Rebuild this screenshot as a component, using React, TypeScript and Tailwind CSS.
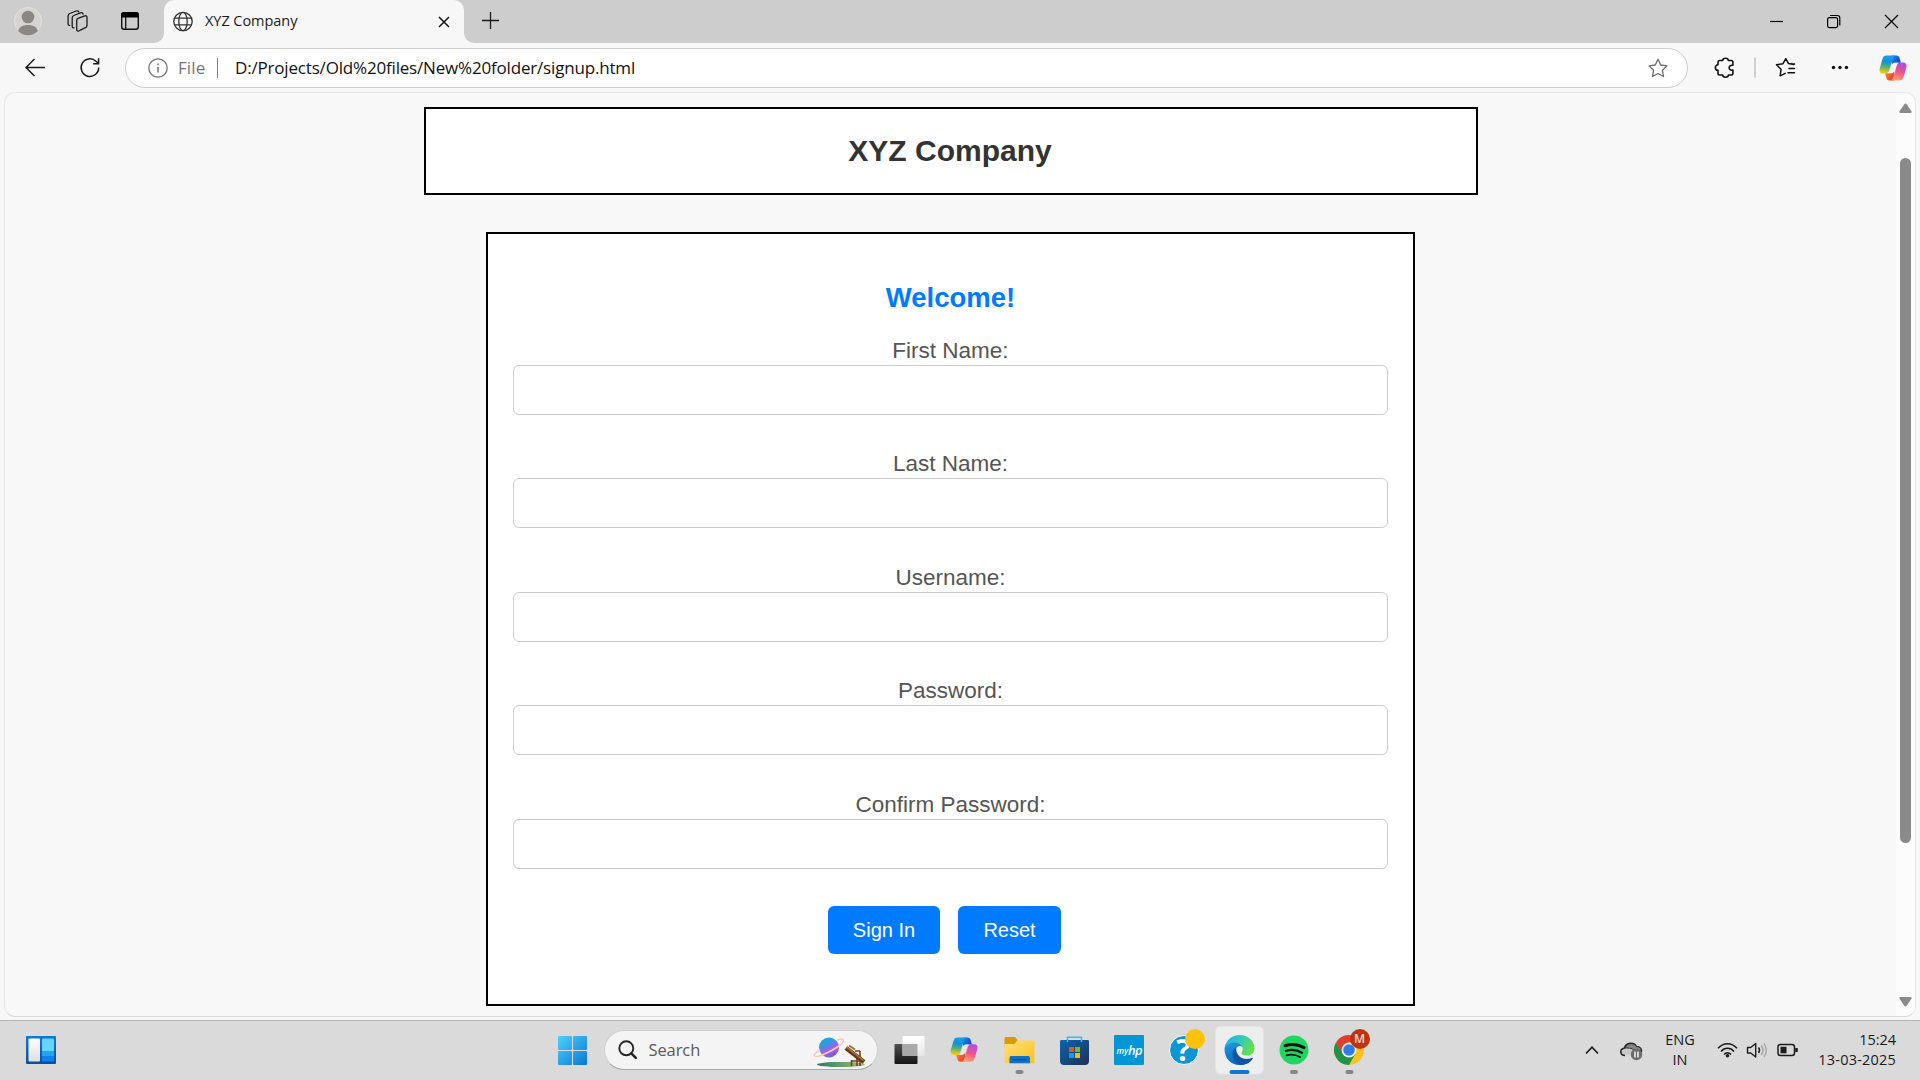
import React from "react";

const UI = "font-['Open_Sans','Noto_Sans',sans-serif]";

function CopilotMark({ id, hole }: { id: string; hole: string }) {
  return (
    <>
      <defs>
        <linearGradient id={id + "a"} x1="0.4" y1="0" x2="0.3" y2="1">
          <stop offset="0" stopColor="#1a9cf0" />
          <stop offset="0.35" stopColor="#1390d8" />
          <stop offset="0.65" stopColor="#5cb56a" />
          <stop offset="0.95" stopColor="#f2c811" />
        </linearGradient>
        <linearGradient id={id + "b"} x1="0.7" y1="0" x2="0.4" y2="1">
          <stop offset="0" stopColor="#a94fe8" />
          <stop offset="0.5" stopColor="#ee5190" />
          <stop offset="1" stopColor="#ffa36b" />
        </linearGradient>
        <linearGradient id={id + "c"} x1="0" y1="0" x2="1" y2="0.6">
          <stop offset="0" stopColor="#1a8ff0" />
          <stop offset="1" stopColor="#1a3fc4" />
        </linearGradient>
        <linearGradient id={id + "d"} x1="0" y1="0" x2="1" y2="0.6">
          <stop offset="0" stopColor="#ff8a2a" />
          <stop offset="1" stopColor="#e8402f" />
        </linearGradient>
      </defs>
      <path d="M13 0.500h4.500c1.600 0 2.600 1 3 2.300l1.400 4.900h-5l-4 2z" fill={`url(#${id}c)`} />
      <path d="M15 25.500h-4.500c-1.600 0-2.600-1-3-2.300L6.100 18.300h5l4-2z" fill={`url(#${id}d)`} />
      <path d="M7.500 0.500h9c-1.500 0.500-2.200 1.500-2.700 3.200l-3.400 11.400c-0.700 2.200-1.800 3.400-4 3.400H4.200c-3 0-4.300-2-3.500-5L3.500 3.800C4.200 1.500 5.500 0.500 7.500 0.500z" fill={`url(#${id}a)`} />
      <path d="M20.500 25.500h-9c1.500-0.500 2.200-1.500 2.700-3.200l3.400-11.400c0.700-2.200 1.800-3.400 4-3.400h2.200c3 0 4.300 2 3.500 5l-2.800 9.700c-0.700 2.300-2 3.300-4 3.300z" fill={`url(#${id}b)`} />
      <path d="M15.300 7.700H19C17.600 8.200 17.200 9.200 16.800 10.500L15.300 15.500C14.700 17.400 13.800 18.300 12.500 18.300H9C10.400 17.800 10.800 16.800 11.200 15.500L12.700 10.500C13.300 8.600 14 7.700 15.300 7.700z" fill={hole} />
    </>
  );
}

function TabStrip() {
  return (
    <div className="flex h-[43px] w-full bg-[#cdcdcd]">
      <svg width="154" height="43" fill="none">
        <circle cx="28" cy="21" r="13.500" fill="#d6d4d0" stroke="#e6e3de" />
        <circle cx="28" cy="17" r="6.300" fill="#8b8783" />
        <path d="M18.200 31c0.800-4 4.800-6 9.800-6s9 2 9.800 6a13.500 13.500 0 0 1-19.600 0z" fill="#8b8783" />
        <g stroke="#1b1b1b" strokeWidth="1.300" strokeLinejoin="round" strokeLinecap="round" transform="translate(-0.500 0)">
          <path d="M78.500 18.300l6.800-2.400c1.200-.4 2.200.2 2.200 1.500v8c0 1.200-.6 1.900-1.600 2.300l-6 3c-1.500.8-2.700.2-2.700-1.300v-8.900c0-1.200.3-1.800 1.300-2.200z" />
          <path d="M74.500 27.800c-1.200.2-1.800-.6-1.800-1.600v-8.400c0-1.200.6-1.900 1.600-2.300l6.500-2.600c1.400-.5 2.600.1 2.800 1.300" />
          <path d="M70.200 25.300c-1.100.1-1.600-.6-1.600-1.600v-7.900c0-1.200.6-1.900 1.600-2.300l6.400-2.500c1.300-.4 2.300 0 2.600 1" />
        </g>
        <rect x="121.700" y="12.700" width="16.600" height="16.600" rx="2.500" stroke="#111" strokeWidth="1.400" />
        <path d="M121 17.500V15c0-1.700 1.300-3 3-3h12c1.700 0 3 1.300 3 3v2.500z" fill="#000" />
        <path d="M125.700 17v12" stroke="#111" strokeWidth="1.300" />
      </svg>
      <div className="flex h-[43px] w-[10px] items-end bg-[#f7f7f7]">
        <div className="h-[43px] w-[10px] rounded-br-[10px] bg-[#cdcdcd]" />
      </div>
      <div className="flex h-[43px] w-[300px] items-center rounded-t-[10px] bg-[#f7f7f7]">
        <svg width="20" height="21" viewBox="0 0 20 21" fill="none" stroke="#333" strokeWidth="1.300" className="ml-[9px]">
          <circle cx="10" cy="10.500" r="9.200" />
          <ellipse cx="10" cy="10.500" rx="4.200" ry="9.200" />
          <path d="M1.700 7.200h16.600M1.700 13.800h16.600" />
        </svg>
        <span className={`${UI} mb-[2px] ml-[12px] w-[220px] whitespace-nowrap text-[14.500px] tracking-[-0.050px] text-[#1b1b1b]`}>XYZ Company</span>
        <svg width="12" height="12" viewBox="0 0 12 12" stroke="#111" strokeWidth="1.500" className="ml-[13px]">
          <path d="M1 1l10 10M11 1L1 11" />
        </svg>
      </div>
      <div className="h-[43px] w-[10px] bg-[#f7f7f7]">
        <div className="h-[43px] w-[10px] rounded-bl-[10px] bg-[#cdcdcd]" />
      </div>
      <svg width="40" height="43" stroke="#1b1b1b" strokeWidth="1.300">
        <path d="M8 20.500h17M16.500 12v17" />
      </svg>
      <svg width="160" height="43" fill="none" stroke="#000" strokeWidth="1.200" className="ml-auto">
        <path d="M10 21.500h13" />
        <rect x="67.600" y="17.600" width="10" height="10" rx="1.800" />
        <path d="M70 15.500h7.500c1.400 0 2.300 1 2.300 2.300v7.700" />
        <path d="M125 15l13 13M138 15l-13 13" />
      </svg>
    </div>
  );
}

const STAR = "M10 1.300l2.700 5.700 6.200.9-4.500 4.400 1.100 6.200L10 15.500l-5.500 3 1.100-6.200L1.100 7.900l6.200-.9z";

function AddressBar() {
  return (
    <div className="flex h-[49px] w-full items-start bg-[#f7f7f7]">
      <svg width="125" height="49" fill="none" stroke="#1b1b1b" strokeWidth="1.500">
        <path d="M45 24.500H26M34.500 16L26 24.500l8.500 8.500" />
        <path d="M98.700 24.500a8.800 8.800 0 1 1-2.700-6.200l2.500 2.200M98.600 15.300v5.500h-5.500" />
      </svg>
      <div className="mt-[5px] flex h-[40px] w-[1563px] items-center rounded-full border border-[#cfcfcf] bg-white">
        <svg width="20" height="20" viewBox="0 0 20 20" fill="none" stroke="#737373" strokeWidth="1.300" className="ml-[22px]">
          <circle cx="10" cy="10" r="9.200" />
          <path d="M10 9v5.500M10 5.400v1.800" strokeWidth="1.500" />
        </svg>
        <span className={`${UI} ml-[10px] w-[30px] text-[17px] tracking-[0.100px] text-[#767676]`}>File</span>
        <div className="ml-[9px] h-[20px] w-[1px] bg-[#808080]" />
        <span className={`${UI} ml-[17px] whitespace-nowrap text-[17px] tracking-[-0.180px] text-[#111]`}>
          D:/Projects/Old%20files/New%20folder/signup.html
        </span>
        <svg width="20" height="20" viewBox="0 0 20 20" fill="none" stroke="#6b6b6b" strokeWidth="1.300" strokeLinejoin="round" className="mr-[19px] ml-auto">
          <path d={STAR} />
        </svg>
      </div>
      <svg width="232" height="49" fill="none" stroke="#111" strokeWidth="1.600" strokeLinejoin="round" strokeLinecap="round">
        <path d="M31.500 17.500h3.200c0-3 5.600-3 5.600 0h2.900c1 0 1.700.7 1.700 1.700v3.100c-5-1-5 5.800 0 4.800v3.200c0 1-.7 1.700-1.700 1.700h-2.800c0 3-5.700 3-5.700 0h-3c-1 0-1.700-.7-1.700-1.700v-2.900c-3.500 0-3.500-5.600 0-5.600v-2.600c0-1 .6-1.700 1.500-1.700z" />
        <path d="M67 15v19" stroke="#c9c9c9" strokeWidth="1.700" />
        <path d="M106 21.500l-5.500-.9-2.700-4.900-2.800 5-6.500 1.100 4.500 4.500-.8 6.500 5-2.500M101 25.500h5.500M100 29.700h6.500M103.500 21h3" strokeWidth="1.500" />
        <g fill="#111" stroke="none">
          <circle cx="145.500" cy="24.500" r="1.700" />
          <circle cx="152" cy="24.500" r="1.700" />
          <circle cx="158.500" cy="24.500" r="1.700" />
        </g>
        <g transform="translate(191 12)" stroke="none">
          <CopilotMark id="top" hole="#f7f7f7" />
        </g>
      </svg>
    </div>
  );
}

function Field({ label }: { label: string }) {
  return (
    <div className="flex h-[113.500px] w-full flex-col items-center">
      <label className="h-[26px] text-[22.500px] leading-[24px] text-[#555]">{label}</label>
      <input className="h-[50px] w-[875px] rounded-[6px] border border-[#ccc] bg-white px-3 outline-none" />
    </div>
  );
}

function Page() {
  return (
    <div className="flex h-[928px] w-full bg-[#f7f7f7] px-[4px]">
      <div className="flex h-[925px] w-full overflow-hidden rounded-[11px] border border-[#e6e6e6] border-b-[#dcdcdc] bg-[#f8f8f8]">
        <main className="flex w-[1891px] flex-col items-center pt-[14px] font-['Liberation_Sans',Arial,sans-serif]">
          <header className="ml-[1px] flex h-[88px] w-[1054px] items-center justify-center border-2 border-black bg-white pr-[2px]">
            <h1 className="text-[30px] leading-[34px] font-bold text-[#333]">XYZ Company</h1>
          </header>
          <form className="mt-[37px] flex h-[774px] w-[929px] flex-col items-center border-2 border-black bg-white">
            <h2 className="mt-[48px] text-[27.500px] leading-[32px] font-bold text-[#007bff]">Welcome!</h2>
            <div className="mt-[24.900px] w-full">
              <Field label="First Name:" />
              <Field label="Last Name:" />
              <Field label="Username:" />
              <Field label="Password:" />
              <Field label="Confirm Password:" />
            </div>
            <div className="mt-[-0.400px] mr-[12px] flex gap-[18px] text-[20px] text-white">
              <button type="button" className="h-[48px] w-[112px] rounded-[6px] bg-[#007bff]">Sign In</button>
              <button type="button" className="h-[48px] w-[103px] rounded-[6px] bg-[#007bff]">Reset</button>
            </div>
          </form>
        </main>
        <div className="flex h-full w-[19px] flex-col items-center bg-[#fcfcfc] pt-[10px]">
          <svg width="13" height="11" fill="#8a8a8a"><path d="M5.300 1.200Q6.500-.2 7.700 1.200L12.600 8.500Q13 10 11.500 10H1.500Q0 10 .4 8.500z" /></svg>
          <div className="mt-[44px] h-[685px] w-[11px] rounded-full bg-[#8a8a8a]" />
          <svg width="13" height="11" fill="#8a8a8a" className="mt-[154px]"><path d="M5.300 8.800Q6.500 10.200 7.700 8.800L12.600 1.500Q13 0 11.500 0H1.500Q0 0 .4 1.500z" /></svg>
        </div>
      </div>
    </div>
  );
}

function Cell({ children }: { children: React.ReactNode }) {
  return <svg width="55" height="60" viewBox="0 0 55 60" fill="none">{children}</svg>;
}

function Indicator() {
  return <rect x="23.500" y="50" width="8" height="4" rx="2" fill="#868686" />;
}

function Taskbar() {
  return (
    <div className="flex h-[60px] w-full items-start bg-[#dadada] shadow-[inset_0_1px_0_#b4b4b4]">
      <svg width="545" height="60" fill="none">
        <defs>
          <linearGradient id="wg" x1="0" y1="0" x2="0" y2="1"><stop stopColor="#0f7bd0" /><stop offset="1" stopColor="#0b4f9c" /></linearGradient>
          <linearGradient id="ww" x1="0" y1="0" x2="0" y2="1"><stop stopColor="#fff" /><stop offset="1" stopColor="#dedede" /></linearGradient>
        </defs>
        <rect x="26" y="16" width="30" height="28" rx="1" fill="url(#wg)" />
        <rect x="28.500" y="18.500" width="11.500" height="23" rx="1" fill="url(#ww)" />
        <rect x="42" y="18.500" width="12" height="13" rx="1" fill="#65d5ff" />
        <rect x="42" y="31" width="12" height="5" fill="#1fa5f5" />
        <rect x="42" y="36" width="12" height="5.500" rx="1" fill="#0a84ea" />
      </svg>
      <svg width="58.500" height="60">
        <defs>
          <linearGradient id="win" x1="0" y1="16" x2="29" y2="45" gradientUnits="userSpaceOnUse">
            <stop stopColor="#4fd0fb" /><stop offset="1" stopColor="#0878d4" />
          </linearGradient>
        </defs>
        <g transform="translate(13 0)" fill="url(#win)">
          <rect y="16" width="14" height="14" rx="1" /><rect x="15" y="16" width="14" height="14" rx="1" />
          <rect y="31" width="14" height="14" rx="1" /><rect x="15" y="31" width="14" height="14" rx="1" />
        </g>
      </svg>
      <div className="mt-[10px] flex h-[40px] w-[274px] items-center rounded-full border border-[#cfcfcf] border-b-[#aaa] bg-[#f4f4f4]">
        <svg width="20" height="20" viewBox="0 0 20 20" fill="none" stroke="#252525" className="ml-[13px]">
          <circle cx="8.300" cy="8.300" r="7" strokeWidth="1.900" />
          <path d="M13.300 13.300l4.500 4.500" strokeWidth="2.600" strokeLinecap="round" />
        </svg>
        <span className={`${UI} mt-[1px] ml-[11px] text-[16.500px] tracking-[-0.100px] text-[#5a5a5a]`}>Search</span>
        <svg width="56" height="38" viewBox="0 0 56 38" fill="none" className="mr-[9px] ml-auto">
          <defs>
            <linearGradient id="pl" x1="0.200" y1="0" x2="0.700" y2="1">
              <stop stopColor="#19a9dc" /><stop offset="0.300" stopColor="#2d9be0" /><stop offset="0.500" stopColor="#8170dc" /><stop offset="0.700" stopColor="#b45be0" /><stop offset="1" stopColor="#4b63d8" />
            </linearGradient>
            <linearGradient id="gr"><stop stopColor="#2a7a68" /><stop offset="1" stopColor="#9fc46a" /></linearGradient>
          </defs>
          <ellipse cx="29" cy="33.500" rx="24" ry="2.600" fill="url(#gr)" />
          <circle cx="17" cy="16.500" r="10" fill="url(#pl)" />
          <path d="M8 19C-1 24.500 1 27.500 10 24S33 12.500 31.500 9C31 7.500 29 7.500 25.500 9" stroke="#f1cdb8" strokeWidth="1.500" />
          <path d="M39.500 29v6M48 20v15M40 30h9M43 20h5M45 35V24" stroke="#7a3f22" strokeWidth="1.600" />
          <path d="M34 17l18 14" stroke="#6b3a1c" strokeWidth="4.600" />
          <path d="M34.500 16l17 13.500" stroke="#b87530" strokeWidth="1.500" />
          <path d="M37 14.500l6 4" stroke="#a0703a" strokeWidth="2" />
        </svg>
      </div>
      <div className="ml-[4px] flex">
        <Cell>
          <defs>
            <linearGradient id="tv" x1="0" y1="0" x2="0" y2="1"><stop stopColor="#505050" /><stop offset="1" stopColor="#151515" /></linearGradient>
            <linearGradient id="tw" x1="0" y1="0" x2="0" y2="1"><stop stopColor="#fff" /><stop offset="1" stopColor="#e6e6e6" /></linearGradient>
          </defs>
          <rect x="12.500" y="24" width="23" height="20" rx="1" fill="url(#tv)" />
          <rect x="20.500" y="16" width="22" height="20" rx="1" fill="url(#tw)" />
          <rect x="20.500" y="24" width="15" height="12" fill="#a9a9a9" />
        </Cell>
        <Cell><g transform="translate(13 17) scale(1 0.970)"><CopilotMark id="task" hole="#e6e6e6" /></g></Cell>
        <Cell>
          <defs><linearGradient id="fo" x1="0" y1="0" x2="1" y2="1"><stop stopColor="#ffe07a" /><stop offset="1" stopColor="#fcc21d" /></linearGradient></defs>
          <path d="M12.500 18.500c0-1 .5-1.500 1.500-1.500h9l3 3.500h-1v7H12.500z" fill="#dc9a06" />
          <path d="M12.500 24h9.500c1.500 0 2.500-3.500 4-3.500h15c1 0 1.500.5 1.500 1.500v20c0 .7-.5 1.200-1.200 1.200H13.700c-.7 0-1.200-.5-1.200-1.200z" fill="url(#fo)" />
          <path d="M17.500 43.200V38c0-1.500 1-2 2-2H36c1 0 2 .5 2 2v5.200z" fill="#1072c4" />
          <path d="M21 39.700h13.500" stroke="#0a4a8c" strokeWidth="1.300" />
          <Indicator />
        </Cell>
        <Cell>
          <defs><linearGradient id="st" x1="0" y1="0" x2="1" y2="1"><stop stopColor="#0d64b0" /><stop offset="1" stopColor="#1f3252" /></linearGradient></defs>
          <path d="M13 21.500c0-1 .5-1.500 1.500-1.500h26c1 0 1.500.5 1.500 1.500V41c0 2.500-1.500 4-4 4H17c-2.500 0-4-1.500-4-4z" fill="url(#st)" />
          <path d="M20.500 22v-4.700h14V22" stroke="#38bdf3" strokeWidth="1.600" />
          <path fill="#f25022" d="M22 27h5v5h-5z" /><path fill="#7fba00" d="M28 27h5v5h-5z" />
          <path fill="#00a4ef" d="M22 33h5v5h-5z" /><path fill="#ffb900" d="M28 33h5v5h-5z" />
        </Cell>
        <div className="flex h-[60px] w-[55px] items-center justify-center">
          <div className="flex h-[30px] w-[30px] items-center justify-center rounded-[1px] bg-[#0296d6] font-['Open_Sans',sans-serif] leading-none font-semibold text-white italic">
            <span className="pt-[2px] text-[8.500px]">my</span><span className="text-[13px] tracking-[-0.900px]">hp</span>
          </div>
        </div>
        <div className="relative h-[60px] w-[55px]">
          <div className="absolute top-[15px] left-[12px] flex h-[30px] w-[30px] items-center justify-center rounded-full border-[1.500px] border-white bg-[#0d96d6] font-['Open_Sans',sans-serif] text-[30px] leading-none font-bold text-white">?</div>
          <div className="absolute top-[9px] left-[28.500px] h-[20px] w-[20px] rounded-full bg-[#ffc10a]" />
        </div>
        <Cell>
          <defs>
            <linearGradient id="e1" x1="0" y1="0" x2="1" y2="0.400"><stop stopColor="#2aa9e8" /><stop offset="0.500" stopColor="#30c6c4" /><stop offset="1" stopColor="#62e04e" /></linearGradient>
            <linearGradient id="e2" x1="0" y1="0" x2="0.500" y2="1"><stop stopColor="#1ea2e2" /><stop offset="1" stopColor="#0c5fc0" /></linearGradient>
          </defs>
          <rect x="3.500" y="6.500" width="48" height="47.500" rx="5" fill="#eeeeee" stroke="#e4e4e4" />
          <path d="M12.500 29C13 23 17 20 21.500 20c5 0 8.500 3 9 7-3-2.500-7 0-7 4.500 0 5 4 9 9 9 3 0 5.500-.8 8-2.300C38.500 42.500 33.500 45 27.500 45c-8.500 0-15-6.700-15-16z" fill="url(#e2)" />
          <path d="M12.800 27.500C14 20 20 15 27.500 15 36 15 42.500 21 42.500 28.500c0 4.500-3.500 7-7.500 7-3.500 0-5.500-1.200-5.500-2.500 0-.8 1.200-1.500 1.200-3.700 0-3.800-3.700-6.800-8.700-6.800-4 0-7.500 2-9.200 5z" fill="url(#e1)" />
          <path d="M24.200 27.800C20.800 29.500 20.300 33 20.800 35.500c1 5.500 5 9.300 8.700 9.300 5 0 9.500-3 11.300-6.300.3-.6-.2-1-.8-.7-2.500 1.200-6 1.600-8.800.7-4.500-1.500-7.300-5.500-7-10.700z" fill="#1154a4" />
          <rect x="17.500" y="50" width="20" height="4" rx="2" fill="#0b78d4" />
        </Cell>
        <Cell>
          <circle cx="27" cy="30" r="14.500" fill="#1ed760" />
          <path d="M18 25.700c6-1.800 13.500-1.200 19 1.900" stroke="#121212" strokeWidth="3" strokeLinecap="round" />
          <path d="M18.800 30.800c5.500-1.500 11.500-.9 16.200 1.900" stroke="#121212" strokeWidth="2.300" strokeLinecap="round" />
          <path d="M19.500 35.300c4.800-1.200 9.600-.7 13.500 1.700" stroke="#121212" strokeWidth="1.900" strokeLinecap="round" />
          <g transform="translate(-0.500 0)"><Indicator /></g>
        </Cell>
        <div className="relative h-[60px] w-[55px]">
          <svg width="55" height="60" fill="none">
            <circle cx="27" cy="30" r="15" fill="#fcc31e" />
            <path d="M14 22.500a15 15 0 0 0 13 22.500l6.500-11.300-12.500-.2z" fill="#20934a" />
            <path d="M14 22.500a15 15 0 0 1 26 0H27L20.500 33.700z" fill="#e33b2e" />
            <circle cx="27" cy="30" r="7.400" fill="#f4f4f4" />
            <circle cx="27" cy="30" r="5.800" fill="#2f7de8" />
            <Indicator />
          </svg>
          <div className="absolute top-[9px] left-[28px] flex h-[20px] w-[20px] items-center justify-center rounded-full bg-[#c2330c] font-['Open_Sans',sans-serif] text-[12px] font-semibold text-[#f6dcd4]">M</div>
        </div>
      </div>
      <div className="ml-auto flex h-[60px] items-center">
        <svg width="70" height="60" fill="none">
          <path d="M9 33.500l6-6.300 6 6.300" stroke="#1b1b1b" strokeWidth="1.700" />
          <path d="M48 35.500c-5 0-6-6.500-.5-7.500 1.500-6 10-6 11.800-1.500 4 0 5.500 3 5.200 5.500" stroke="#222" strokeWidth="1.500" fill="#c9c9c9" />
          <path d="M48 28c2-5.500 9.500-5.500 11.300-1.500 3.500 0 5 2 5 4l-5 1c-4-3.500-7-3.500-11.300-3.500z" fill="#858585" stroke="#333" strokeWidth="1" />
          <circle cx="59.500" cy="34.500" r="5.700" fill="#6c6c6c" />
          <path d="M58 31.500v6M61 31.500v6" stroke="#f4f4f4" strokeWidth="1.500" />
        </svg>
        <div className={`${UI} w-[60px] text-center text-[14.500px] leading-[20px] text-[#1b1b1b]`}>
          <div className="ml-[6px]">ENG</div><div className="ml-[6px]">IN</div>
        </div>
        <svg width="96" height="60" fill="none" stroke="#1b1b1b" className="ml-[10px]">
          <path d="M1 28.200c5.500-6 13.500-6 19 0M4 31.500c3.500-4.200 9.500-4.200 13 0M7 34.500c2-2.500 5-2.500 7 0" strokeWidth="1.500" />
          <circle cx="10.500" cy="35.800" r="1.800" fill="#1b1b1b" stroke="none" />
          <path d="M30.500 27.500h3.200l5-4v13.500l-5-4h-3.200z" strokeWidth="1.400" strokeLinejoin="round" />
          <path d="M41.500 27.500c1.200 1.500 1.200 4 0 5.500" strokeWidth="1.400" />
          <path d="M44.200 25.500c2.200 2.800 2.200 6.700 0 9.500M47 23.500c3 4 3 9.500 0 13.500" stroke="#a5a5a5" strokeWidth="1.400" />
          <rect x="61" y="24.500" width="16.500" height="11" rx="2.500" strokeWidth="1.500" />
          <rect x="63.500" y="26.800" width="6" height="6.500" fill="#1b1b1b" stroke="none" />
          <path d="M79.500 28v4" strokeWidth="2.500" />
        </svg>
        <div className={`${UI} mr-[24px] w-[83px] text-right text-[14.500px] leading-[20px] tracking-[0.200px] whitespace-nowrap text-[#1b1b1b]`}>
          <div className="tracking-[-0.050px]">15:24</div><div>13-03-2025</div>
        </div>
      </div>
    </div>
  );
}

export default function App() {
  return (
    <div className="flex h-[1080px] w-[1920px] flex-col overflow-hidden bg-[#f7f7f7]">
      <TabStrip />
      <AddressBar />
      <Page />
      <Taskbar />
    </div>
  );
}
